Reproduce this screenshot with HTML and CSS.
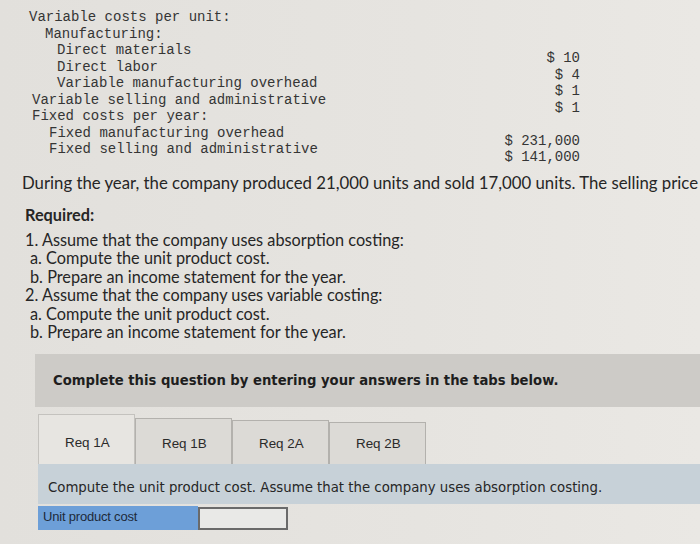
FILE: index.html
```html
<!DOCTYPE html>
<html>
<head>
<meta charset="utf-8">
<link rel="stylesheet" href="styles.css">
</head>
<body>
<div class="page">
  <div class="costs">
    <div class="row l0"><span>Variable costs per unit:</span></div>
    <div class="row l1"><span>Manufacturing:</span></div>
    <div class="row l2"><span>Direct materials</span><span class="val">$ 10</span></div>
    <div class="row l2"><span>Direct labor</span><span class="val">$ 4</span></div>
    <div class="row l2"><span>Variable manufacturing overhead</span><span class="val">$ 1</span></div>
    <div class="row l0b"><span>Variable selling and administrative</span><span class="val">$ 1</span></div>
    <div class="row l0b"><span>Fixed costs per year:</span></div>
    <div class="row l1b"><span>Fixed manufacturing overhead</span><span class="val">$ 231,000</span></div>
    <div class="row l1b"><span>Fixed selling and administrative</span><span class="val">$ 141,000</span></div>
  </div>

  <p class="intro">During the year, the company produced 21,000 units and sold 17,000 units. The selling price</p>

  <div class="required">
    <p class="req-title">Required:</p>
    <p class="req-line">1. Assume that the company uses absorption costing:</p>
    <p class="req-line sub">a. Compute the unit product cost.</p>
    <p class="req-line sub">b. Prepare an income statement for the year.</p>
    <p class="req-line">2. Assume that the company uses variable costing:</p>
    <p class="req-line sub">a. Compute the unit product cost.</p>
    <p class="req-line sub">b. Prepare an income statement for the year.</p>
  </div>

  <div class="instructions">Complete this question by entering your answers in the tabs below.</div>

  <div class="tabs">
    <div class="tab active">Req 1A</div>
    <div class="tab t2">Req 1B</div>
    <div class="tab t3">Req 2A</div>
    <div class="tab t4">Req 2B</div>
  </div>

  <div class="prompt">Compute the unit product cost. Assume that the company uses absorption costing.</div>

  <div class="answer">
    <div class="answer-label">Unit product cost</div>
    <div class="answer-input"></div>
  </div>
</div>
</body>
</html>
```
FILE: styles.css
```css
html, body {
  margin: 0;
  padding: 0;
  background: #e4e2de;
  overflow: hidden;
}
.page {
  width: 700px;
  height: 544px;
  background: linear-gradient(90deg, #e2e0dc 0%, #e6e4e0 60%, #eae8e4 100%);
}
.costs {
  padding-top: 9px;
  font-family: "Liberation Mono", monospace;
  font-size: 14px;
  color: #353535;
}
.row {
  display: flex;
  align-items: flex-start;
  justify-content: space-between;
  width: 580px;
  height: 16.5px;
  line-height: 16.5px;
  white-space: pre;
}
.l0 { padding-left: 29px; width: 551px; }
.l0b { padding-left: 32px; width: 548px; }
.l1 { padding-left: 45px; width: 535px; }
.l1b { padding-left: 49px; width: 531px; }
.l2 { padding-left: 57px; width: 523px; }
.val { text-align: right; margin-top: 8px; }

.intro {
  margin: 15px 0 0 22px;
  font-family: Lato, "Liberation Sans", sans-serif;
  font-size: 16.75px;
  line-height: 20px;
  color: #262626;
  white-space: nowrap;
}
.required {
  margin: 12px 0 0 25px;
  font-family: Lato, "Liberation Sans", sans-serif;
  font-size: 16.3px;
  color: #262626;
}
.required p { margin: 0; white-space: nowrap; }
.req-title {
  font-weight: bold;
  line-height: 20px;
  margin-bottom: 6px !important;
}
.req-line { line-height: 18.5px; }
.req-line.sub { padding-left: 5px; }

.instructions {
  margin: 12px 0 0 35px;
  height: 53px;
  box-sizing: border-box;
  padding: 19px 0 0 18px;
  background: #cdcbc7;
  font-family: "DejaVu Sans", Verdana, sans-serif;
  font-weight: bold;
  font-size: 13.2px;
  line-height: 16px;
  color: #1e1e1e;
  white-space: nowrap;
}
.tabs {
  display: flex;
  align-items: flex-end;
  margin: 7px 0 0 38px;
  height: 50px;
}
.tab {
  width: 97px;
  height: 46px;
  box-sizing: border-box;
  border: 1px solid #b3b1ad;
  border-bottom: none;
  background: #dcdad6;
  font-family: "Liberation Sans", Arial, sans-serif;
  font-size: 13.4px;
  color: #2a2a2a;
  padding: 17px 0 0 26px;
}
.tab.t3 { height: 44px; padding-top: 15px; }
.tab.t4 { height: 42px; padding-top: 13px; }
.tab.active {
  height: 50px;
  padding-top: 20px;
  background: #e7e5e1;
  border-color: #c4c2be;
}
.prompt {
  margin-left: 38px;
  height: 40px;
  box-sizing: border-box;
  padding: 16px 0 0 10px;
  background: #c7d1d8;
  font-family: "DejaVu Sans", Verdana, sans-serif;
  font-size: 13.3px;
  line-height: 16px;
  color: #262626;
  white-space: nowrap;
}
.answer {
  display: flex;
  margin: 2px 0 0 38px;
}
.answer-label {
  width: 160px;
  height: 24px;
  box-sizing: border-box;
  padding: 3px 0 0 5px;
  background: #6d9fd8;
  font-family: "Liberation Sans", Arial, sans-serif;
  font-size: 13px;
  letter-spacing: -0.2px;
  color: #1d2a3a;
}
.answer-input {
  width: 90px;
  height: 23px;
  margin-top: 1px;
  box-sizing: border-box;
  border: 2px solid #6a6a6a;
  background: #e9e9e7;
}
```
